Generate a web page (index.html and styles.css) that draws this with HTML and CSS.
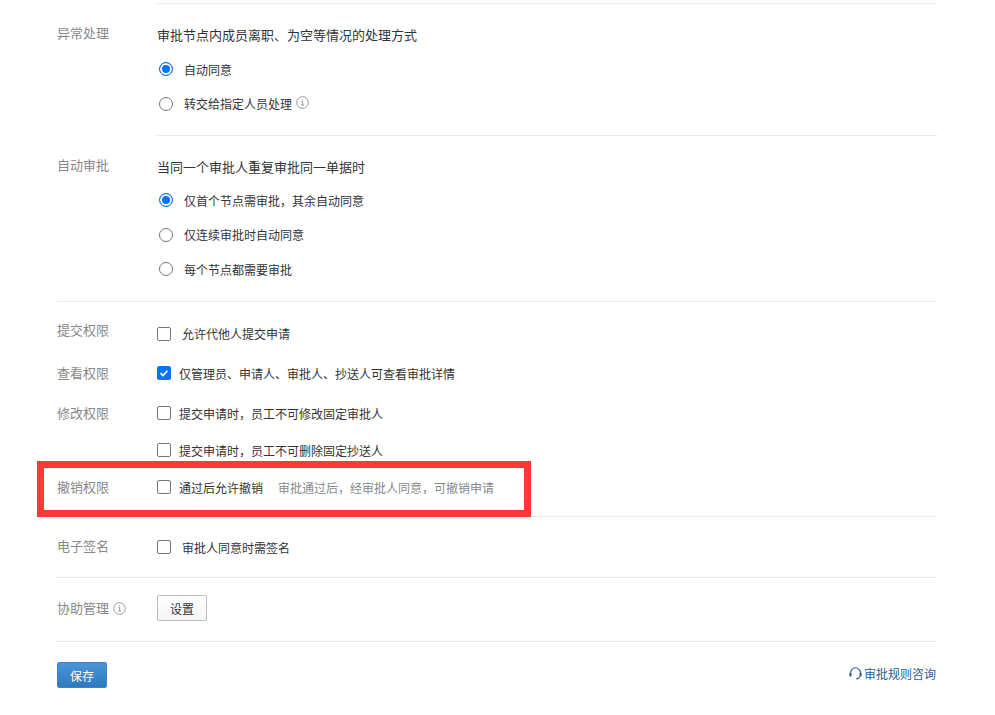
FILE: index.html
```html
<!DOCTYPE html>
<html lang="zh-CN">
<head>
<meta charset="utf-8">
<title>审批设置</title>
<link rel="stylesheet" href="styles.css">
</head>
<body>
<main class="page">
  <section class="group group-first">
    <div class="label">异常处理</div>
    <div class="body">
      <div class="heading">审批节点内成员离职、为空等情况的处理方式</div>
      <div class="option"><span class="radio on"></span>自动同意</div>
      <div class="option"><span class="radio"></span>转交给指定人员处理<svg class="info info-opt" viewBox="0 0 13 13"><circle cx="6.5" cy="6.5" r="5.8"/><path d="M5.3 5.3h1.4v3.6M5 9h3M6.5 3.2v1"/></svg></div>
    </div>
  </section>
  <section class="group group-second">
    <div class="label">自动审批</div>
    <div class="body">
      <div class="heading">当同一个审批人重复审批同一单据时</div>
      <div class="option"><span class="radio on"></span>仅首个节点需审批，其余自动同意</div>
      <div class="option"><span class="radio"></span>仅连续审批时自动同意</div>
      <div class="option"><span class="radio"></span>每个节点都需要审批</div>
    </div>
  </section>
  <div class="rule"></div>
  <div class="perm perm-submit">
    <div class="label">提交权限</div>
    <div class="check wide"><span class="box"></span>允许代他人提交申请</div>
  </div>
  <div class="perm perm-view">
    <div class="label">查看权限</div>
    <div class="check"><span class="box on"><svg viewBox="0 0 14 14"><path d="M3 7.2l2.8 2.8L11 4.4"/></svg></span>仅管理员、申请人、审批人、抄送人可查看审批详情</div>
  </div>
  <div class="perm perm-edit">
    <div class="label">修改权限</div>
    <div class="check"><span class="box"></span>提交申请时，员工不可修改固定审批人</div>
  </div>
  <div class="perm perm-del">
    <div class="label"></div>
    <div class="check"><span class="box"></span>提交申请时，员工不可删除固定抄送人</div>
  </div>
  <div class="perm perm-revoke">
    <div class="label">撤销权限</div>
    <div class="check"><span class="box"></span>通过后允许撤销<span class="hint">审批通过后，经审批人同意，可撤销申请</span></div>
  </div>
  <div class="rule"></div>
  <div class="perm perm-sign">
    <div class="label">电子签名</div>
    <div class="check wide"><span class="box"></span>审批人同意时需签名</div>
  </div>
  <div class="rule"></div>
  <div class="perm perm-assist">
    <div class="label">协助管理<svg class="info" viewBox="0 0 13 13"><circle cx="6.5" cy="6.5" r="5.8"/><path d="M5.3 5.3h1.4v3.6M5 9h3M6.5 3.2v1"/></svg></div>
    <button class="btn" type="button">设置</button>
  </div>
  <div class="rule"></div>
  <footer class="footer">
    <button class="save" type="button">保存</button>
    <a class="help"><svg viewBox="0 0 13 13"><path d="M1.5 7V5.8a5 5 0 0 1 10 0V7"/><path d="M10.8 9.4c-.6 1.6-1.9 2.5-3.6 2.5"/><rect class="solid" x="0.4" y="5.8" width="2.1" height="3.6" rx=".7"/><rect class="solid" x="10.5" y="5.8" width="2.1" height="3.6" rx=".7"/></svg>审批规则咨询</a>
  </footer>
</main>
<div class="annotation"></div>
</body>
</html>
```
FILE: styles.css
```css
* { box-sizing: border-box; }
html, body { margin: 0; padding: 0; background: #fff; }
body {
  font-family: "Noto Sans CJK SC", "Microsoft YaHei", sans-serif;
  font-size: 12px;
  color: #333;
  width: 995px;
  height: 715px;
  overflow: hidden;
  position: relative;
}
.page { width: 880px; margin-left: 57px; padding-top: 3px; }
.group { display: flex; }
.label {
  width: 100px;
  flex: none;
  font-size: 13px;
  line-height: 20px;
  color: #888;
  display: flex;
  align-items: center;
}
.body { flex: 1; border-top: 1px solid #e8e8e8; }
.group-first .body { padding-top: 21px; height: 132px; }
.group-first .label { margin-top: 20px; height: 20px; }
.group-first .heading { margin-bottom: 7px; }
.group-second .body { padding-top: 21px; height: 166px; }
.group-second .label { margin-top: 20px; height: 20px; }
.group-second .heading { margin-bottom: 6px; }
.heading { font-size: 13px; line-height: 20px; color: #333; height: 20px; }
.option { display: flex; align-items: center; height: 34.5px; font-size: 12px; color: #333; }
.radio {
  width: 14px; height: 14px; margin: 0 11px 0 2px;
  border: 1px solid #767676; border-radius: 50%;
  flex: none; background: #fff;
}
.radio.on { border-color: #0a74f0; box-shadow: inset 0 0 0 2px #fff; background: #0a74f0; }
.info { width: 13px; height: 13px; margin-left: 4px; flex: none; fill: none; stroke: #999; stroke-width: 1; }
.info-opt { margin-top: -2px; }
.rule { height: 1px; background: #e8e8e8; }
.perm { display: flex; align-items: center; }
.check { display: flex; align-items: center; font-size: 12px; color: #333; }
.box {
  width: 14px; height: 14px; margin-right: 8px; flex: none;
  border: 1px solid #767676; border-radius: 2px; background: #fff;
  display: flex;
}
.check.wide .box { margin-right: 11px; }
.box.on { background: #0a74f0; border-color: #0a74f0; }
.box svg { width: 12px; height: 12px; fill: none; stroke: #fff; stroke-width: 2; }
.perm-submit { height: 62px; padding-top: 1px; }
.perm-submit .label { margin-top: -7px; }
.perm-view { height: 18px; }
.perm-edit { height: 62px; }
.perm-del { height: 12px; }
.perm-revoke { height: 62px; margin-bottom: -2px; }
.hint { color: #888; margin-left: 15px; }
.perm-sign { height: 60px; }
.perm-sign .label { margin-top: -2px; }
.perm-assist { height: 63px; padding-bottom: 3px; }
.btn {
  width: 50px; height: 26px; padding: 0;
  font: inherit; color: #333;
  background: linear-gradient(#fff, #f5f5f5);
  border: 1px solid #bbb; border-radius: 2px;
}
.footer { display: flex; justify-content: space-between; align-items: center; padding-top: 20px; }
.save {
  width: 50px; height: 26px; padding: 0;
  font: inherit; color: #fff;
  background: linear-gradient(#4a94d8, #2f7abd);
  border: 1px solid #3a85c9; border-radius: 2px;
}
.help { display: flex; align-items: center; color: #2a5d92; font-size: 12px; margin: -3px 1px 0 0; }
.help svg { width: 13px; height: 13px; margin-right: 2px; fill: none; stroke: #2a5d92; stroke-width: 1.1; }
.help .solid { fill: #2a5d92; stroke: none; }
.annotation {
  position: absolute; left: 37px; top: 461px; width: 494px; height: 56px;
  border: 7px solid #ff3838;
}
```
